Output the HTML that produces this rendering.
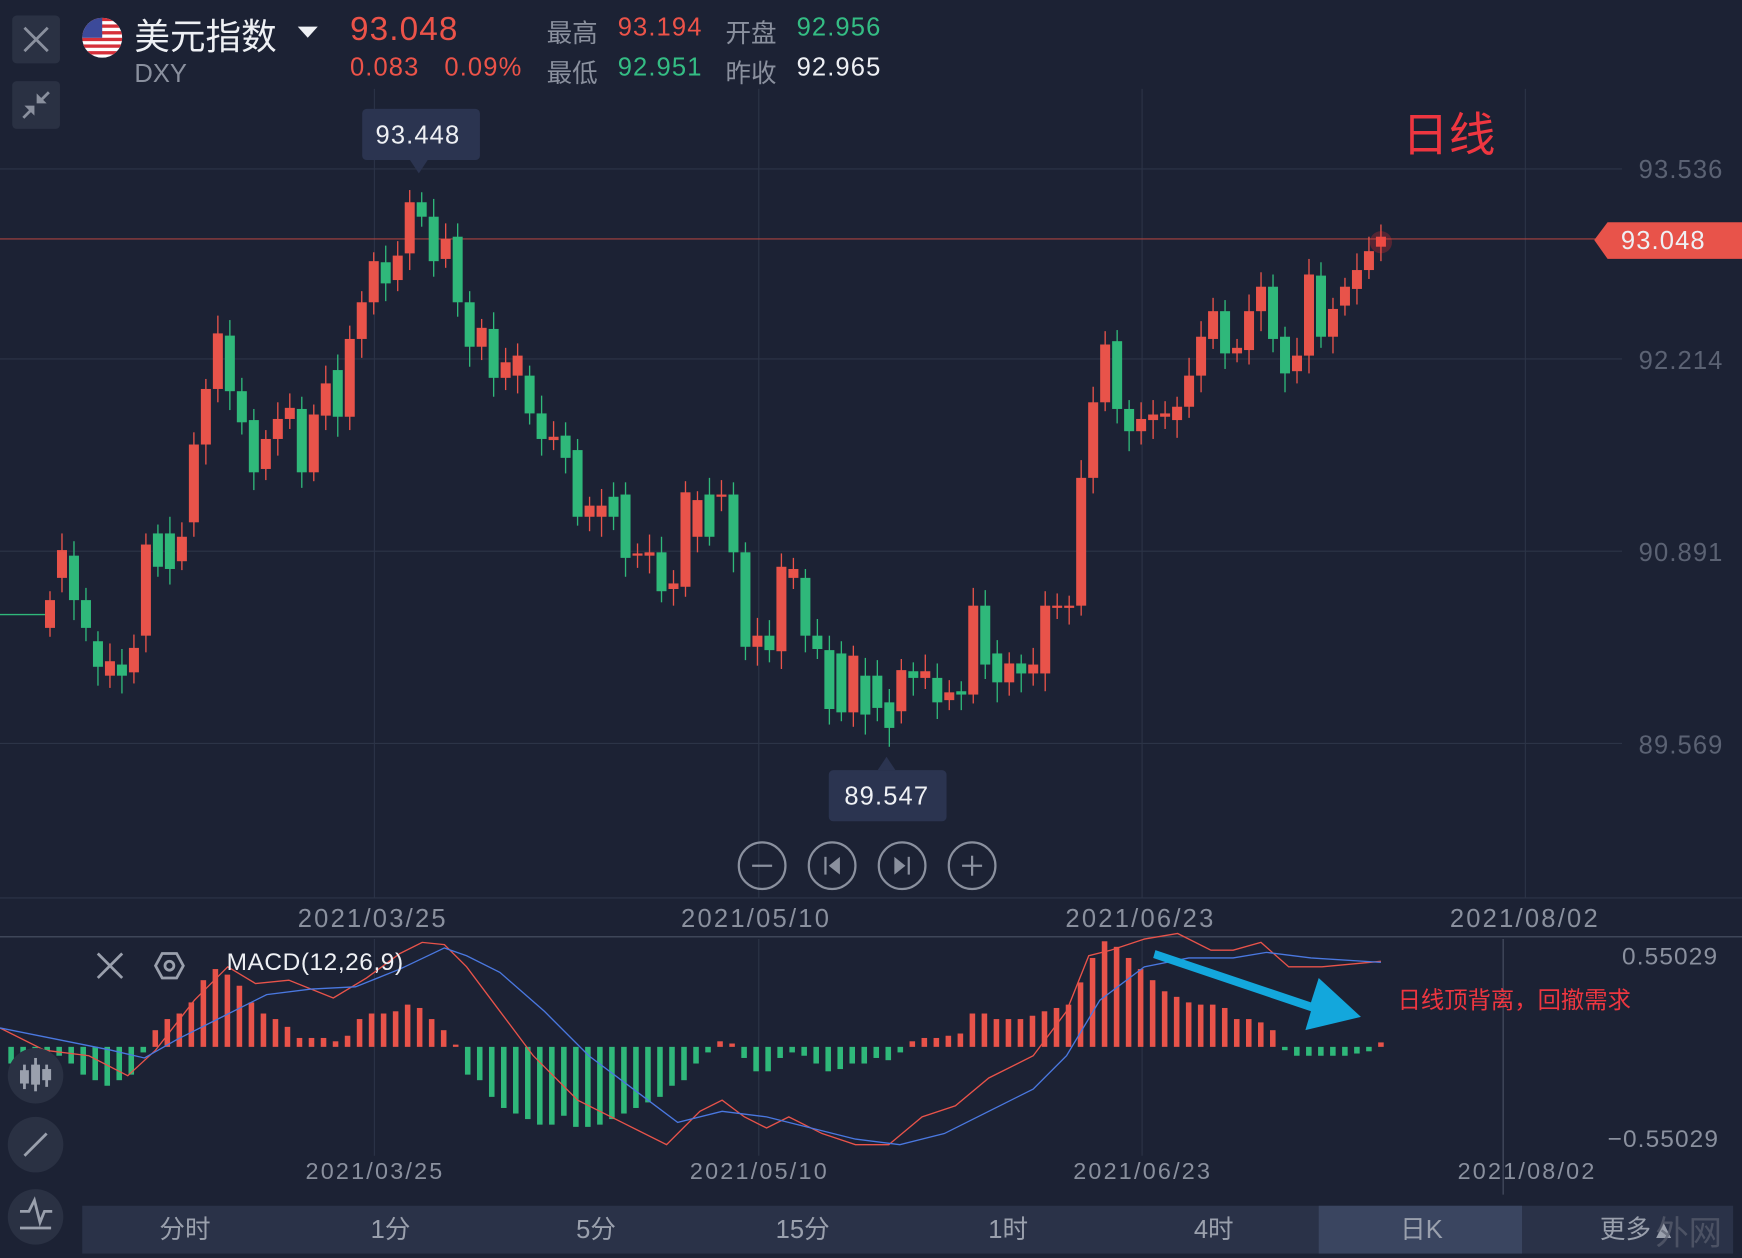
<!DOCTYPE html>
<html><head><meta charset="utf-8"><style>
html,body{margin:0;padding:0;background:#1c2234;width:1742px;height:1258px;overflow:hidden}
#w{position:absolute;left:0;top:0;width:1568px;height:1132px;transform:scale(1.11097,1.11131);transform-origin:0 0;font-family:"Liberation Sans","Noto Sans CJK SC",sans-serif;background:#1c2234}
.t{position:absolute;white-space:nowrap}
.r{color:#ec5349}.g{color:#34bd84}.gr{color:#8a909e}.wh{color:#eef0f4}
.n{letter-spacing:1px}
.dt{letter-spacing:2px}
.tab{position:absolute;top:1085px;height:43px;line-height:43px;font-size:23px;color:#9aa0ad;text-align:center;width:185px}
</style></head><body><div id="w">
<svg id="s" width="1568" height="1132" style="position:absolute;left:0;top:0">
<g stroke="#2c3447" stroke-width="1">
<line x1="0" y1="152" x2="1460" y2="152"/><line x1="0" y1="323" x2="1460" y2="323"/><line x1="0" y1="496" x2="1460" y2="496"/><line x1="0" y1="669" x2="1460" y2="669"/>
<line x1="337" y1="80" x2="337" y2="808"/><line x1="683" y1="80" x2="683" y2="808"/><line x1="1028" y1="80" x2="1028" y2="808"/><line x1="1373" y1="80" x2="1373" y2="808"/>
<line x1="337" y1="845" x2="337" y2="1040"/><line x1="683" y1="845" x2="683" y2="1040"/><line x1="1028" y1="845" x2="1028" y2="1040"/><line x1="1353" y1="845" x2="1353" y2="1075" stroke="#4a5265"/>
</g>
<line x1="0" y1="808" x2="1568" y2="808" stroke="#2c3447"/>
<line x1="0" y1="843" x2="1568" y2="843" stroke="#4a5265"/>
<line x1="0" y1="215" x2="1440" y2="215" stroke="#a8433f" stroke-width="1"/>
<g id="c"></g><g id="m"></g>
<circle cx="1243" cy="218" r="10" fill="#ff3030" opacity="0.25"/>
<polyline fill="none" stroke="#e8534a" stroke-width="1.2" points="0,925 40,945 80,950 115,968 140,945 175,900 205,870 230,885 260,882 300,898 330,880 360,858 380,848 400,850 420,870 450,910 480,950 520,990 560,1010 600,1030 630,1000 650,990 670,1005 690,1015 710,1005 740,1020 770,1030 800,1030 830,1005 860,995 890,970 930,950 960,910 980,860 1000,855 1030,845 1060,840 1090,855 1110,855 1135,848 1160,870 1190,870 1243,865"/>
<polyline fill="none" stroke="#4a78e0" stroke-width="1.2" points="0,925 50,935 100,945 130,952 160,935 200,915 240,895 280,890 320,888 360,872 400,853 420,860 450,875 490,910 530,950 570,980 610,1010 650,1000 690,1005 730,1015 770,1025 810,1030 850,1020 890,1000 930,980 960,950 990,900 1030,870 1070,862 1110,862 1140,857 1180,862 1243,866"/>
<polygon fill="#13a7dc" points="1040,855 1180,902 1187,880 1225,915 1175,927 1180,910 1038,862"/>
<rect x="326" y="98" width="106" height="46" rx="4" fill="#2b3450"/><polygon points="369,144 385,144 377,156" fill="#2b3450"/>
<rect x="746" y="693" width="106" height="46" rx="4" fill="#2b3450"/><polygon points="790,693 806,693 798,681" fill="#2b3450"/>
<polygon points="1435,216 1447,200 1568,200 1568,233 1447,233" fill="#e8534a"/>
<g fill="none" stroke="#8a909e" stroke-width="2">
<circle cx="686" cy="779" r="21"/><circle cx="749" cy="779" r="21"/><circle cx="812" cy="779" r="21"/><circle cx="875" cy="779" r="21"/>
<line x1="677" y1="779" x2="695" y2="779"/><line x1="866" y1="779" x2="884" y2="779"/><line x1="875" y1="770" x2="875" y2="788"/>
<line x1="743" y1="771" x2="743" y2="787"/><line x1="818" y1="771" x2="818" y2="787"/>
</g>
<polygon points="756,771 756,787 746,779" fill="#8a909e"/><polygon points="805,771 805,787 815,779" fill="#8a909e"/>
<rect x="11" y="14" width="43" height="43" rx="4" fill="#2a3143"/>
<rect x="11" y="73" width="43" height="43" rx="4" fill="#2a3143"/>
<g stroke="#8a909e" stroke-width="2.5" fill="none"><line x1="22" y1="25" x2="43" y2="46"/><line x1="43" y1="25" x2="22" y2="46"/>
<line x1="44" y1="83" x2="37" y2="90"/><line x1="21" y1="106" x2="28" y2="99"/></g>
<polygon points="34,85 34,94 43,94" fill="#8a909e" transform="translate(-1,-1)"/>
<polygon points="23,95 32,95 32,104" fill="#8a909e" transform="translate(-1,0)"/>
<clipPath id="fc"><circle cx="92" cy="34" r="18"/></clipPath>
<g clip-path="url(#fc)"><rect x="74" y="16" width="36" height="36" fill="#fff"/>
<g fill="#d6303a"><rect x="74" y="16" width="36" height="3"/><rect x="74" y="22" width="36" height="3"/><rect x="74" y="28" width="36" height="3"/><rect x="74" y="34" width="36" height="3"/><rect x="74" y="40" width="36" height="3"/><rect x="74" y="46" width="36" height="3"/></g>
<rect x="74" y="16" width="18" height="18" fill="#3c4a9a"/></g>
<polygon points="268,24 286,24 277,34" fill="#eef0f4"/>
<g stroke="#9aa0ad" stroke-width="2.5" fill="none"><line x1="88" y1="858" x2="110" y2="880"/><line x1="110" y1="858" x2="88" y2="880"/>
<polygon points="146,858 159,858 165,869 159,880 146,880 140,869"/><circle cx="152.5" cy="869" r="4"/></g>
<g fill="#2a3143"><circle cx="32" cy="968" r="25"/><circle cx="32" cy="1030" r="25"/><circle cx="32" cy="1095" r="25"/></g>
<g stroke="#9aa0ad" stroke-width="2.5" fill="none"><line x1="22" y1="1040" x2="42" y2="1020"/><polyline points="18,1090 26,1090 31,1080 36,1100 40,1090 47,1090"/><line x1="18" y1="1105" x2="46" y2="1105"/>
<line x1="22" y1="958" x2="22" y2="980"/><line x1="32" y1="952" x2="32" y2="982"/><line x1="42" y1="958" x2="42" y2="978"/></g>
<g fill="#9aa0ad"><rect x="18" y="963" width="8" height="12"/><rect x="28" y="958" width="8" height="18"/><rect x="38" y="962" width="8" height="10"/></g>
<rect x="74" y="1085" width="1486" height="43" fill="#2a3248"/><rect x="1187" y="1085" width="183" height="43" fill="#3a4560"/>
</svg>
<div class="t wh" style="left:121px;top:8px;font-size:32px">美元指数</div>
<div class="t gr" style="left:121px;top:53px;font-size:23px">DXY</div>
<div class="t r n" style="left:315px;top:10px;font-size:30px">93.048</div>
<div class="t r n" style="left:315px;top:47px;font-size:23px">0.083</div>
<div class="t r n" style="left:400px;top:47px;font-size:23px">0.09%</div>
<div class="t gr" style="left:492px;top:11px;font-size:23px">最高</div><div class="t r n" style="left:556px;top:11px;font-size:23px">93.194</div>
<div class="t gr" style="left:653px;top:11px;font-size:23px">开盘</div><div class="t g n" style="left:717px;top:11px;font-size:23px">92.956</div>
<div class="t gr" style="left:492px;top:47px;font-size:23px">最低</div><div class="t g n" style="left:556px;top:47px;font-size:23px">92.951</div>
<div class="t gr" style="left:653px;top:47px;font-size:23px">昨收</div><div class="t wh n" style="left:717px;top:47px;font-size:23px">92.965</div>
<div class="t wh n" style="left:338px;top:108px;font-size:23px">93.448</div>
<div class="t wh n" style="left:760px;top:703px;font-size:23px">89.547</div>
<div class="t" style="left:1262px;top:88px;font-size:42px;color:#ee3640">日线</div>
<div class="t n" style="left:1475px;top:139px;font-size:23px;color:#5b6273">93.536</div>
<div class="t n" style="left:1475px;top:311px;font-size:23px;color:#5b6273">92.214</div>
<div class="t n" style="left:1475px;top:484px;font-size:23px;color:#5b6273">90.891</div>
<div class="t n" style="left:1475px;top:657px;font-size:23px;color:#5b6273">89.569</div>
<div class="t wh n" style="left:1459px;top:203px;font-size:23px">93.048</div>
<div class="t gr dt" style="left:268px;top:813px;font-size:23px">2021/03/25</div>
<div class="t gr dt" style="left:613px;top:813px;font-size:23px">2021/05/10</div>
<div class="t gr dt" style="left:959px;top:813px;font-size:23px">2021/06/23</div>
<div class="t gr dt" style="left:1305px;top:813px;font-size:23px">2021/08/02</div>
<div class="t wh" style="left:204px;top:853px;font-size:22px;letter-spacing:0.5px">MACD(12,26,9)</div>
<div class="t gr n" style="left:1460px;top:848px;font-size:22px">0.55029</div>
<div class="t gr n" style="left:1447px;top:1012px;font-size:22px">−0.55029</div>
<div class="t" style="left:1258px;top:884px;font-size:21px;color:#ee3640">日线顶背离，回撤需求</div>
<div class="t gr dt" style="left:275px;top:1043px;font-size:21px">2021/03/25</div>
<div class="t gr dt" style="left:621px;top:1043px;font-size:21px">2021/05/10</div>
<div class="t gr dt" style="left:966px;top:1043px;font-size:21px">2021/06/23</div>
<div class="t gr dt" style="left:1312px;top:1043px;font-size:21px">2021/08/02</div>
<div class="tab" style="left:74px">分时</div><div class="tab" style="left:259px">1分</div><div class="tab" style="left:444px">5分</div><div class="tab" style="left:630px">15分</div><div class="tab" style="left:815px">1时</div><div class="tab" style="left:1000px">4时</div><div class="tab" style="left:1187px">日K</div><div class="tab" style="left:1382px">更多▲</div>
<div class="t" style="left:1490px;top:1085px;font-size:30px;color:#5b6070;opacity:.7">外网</div>
</div>
<script>
var R="#e8534a",G="#2fb87a";
var d=[[540,565,R],[495,520,R],[500,540,G],[540,565,G],[577,600,G],[595,608,R],[598,608,G],[583,605,R],[490,572,R],[480,510,G],[480,512,G],[483,505,R],[400,470,R],[350,400,R],[300,350,R],[302,352,G],[352,380,G],[378,425,G],[395,422,R],[377,395,R],[367,377,R],[368,425,G],[373,425,R],[345,374,R],[333,375,G],[305,375,R],[272,305,R],[235,272,R],[236,255,G],[230,252,R],[182,228,R],[182,195,G],[195,235,G],[215,233,R],[213,272,G],[272,312,G],[295,312,R],[296,340,G],[326,340,R],[320,338,R],[338,372,G],[372,395,G],[393,396,R],[392,412,G],[405,465,G],[455,465,R],[455,465,R],[447,465,G],[445,502,G],[498,500,R],[497,500,R],[497,532,G],[525,530,R],[443,528,R],[450,483,R],[445,483,G],[445,447,R],[445,497,G],[497,582,G],[572,582,R],[572,585,G],[510,586,R],[512,520,R],[520,572,G],[572,584,G],[585,638,G],[588,641,G],[590,641,R],[608,643,G],[608,637,G],[632,655,G],[603,640,R],[604,610,G],[604,610,R],[610,632,G],[623,630,R],[622,625,G],[545,625,R],[545,598,G],[588,614,G],[597,614,R],[597,606,G],[598,606,R],[545,606,R],[545,547,R],[545,547,R],[430,545,R],[362,430,R],[310,362,R],[307,368,G],[368,388,G],[377,388,R],[373,378,R],[372,375,R],[366,378,R],[338,366,R],[303,338,R],[280,305,R],[280,318,G],[313,318,R],[280,315,R],[258,280,R],[258,305,G],[303,336,G],[320,334,R],[247,320,R],[248,303,G],[278,303,R],[258,275,R],[243,260,R],[226,243,R],[213,222,R]];
var n=d.length,sp=(1243-45)/(n-1),h="";
for(var i=0;i<n;i++){var x=45+i*sp,a=d[i],t=a[0]-8-(i*7%9),b=a[1]+8+(i*5%11);
h+='<line x1="'+x+'" y1="'+t+'" x2="'+x+'" y2="'+b+'" stroke="'+a[2]+'" stroke-width="1.2"/>';
h+='<rect x="'+(x-4.5)+'" y="'+a[0]+'" width="9" height="'+Math.max(2,a[1]-a[0])+'" fill="'+a[2]+'"/>';}
h='<line x1="0" y1="553" x2="45" y2="553" stroke="'+G+'" stroke-width="1.2"/>'+h;
document.getElementById("c").innerHTML=h;
var m=[-15,-20,-15,-10,-8,-15,-25,-30,-35,-30,-25,-5,15,25,30,40,60,70,65,55,40,30,25,18,8,8,8,5,10,25,30,30,32,38,35,25,15,2,-25,-30,-45,-55,-60,-65,-70,-70,-62,-72,-72,-70,-65,-60,-55,-50,-45,-35,-30,-15,-5,5,3,-10,-22,-22,-10,-5,-8,-15,-22,-20,-15,-15,-10,-12,-5,5,8,8,10,12,30,30,25,25,25,28,32,35,38,58,80,95,90,80,70,60,50,45,40,38,38,35,25,25,22,15,-3,-8,-8,-8,-8,-8,-6,-4,4];
var k=m.length,s2=(1243-10)/(k-1),g="";
for(var j=0;j<k;j++){var xx=10+j*s2,v=m[j];g+='<rect x="'+(xx-2.5)+'" y="'+(v>0?942-v:942)+'" width="5" height="'+Math.abs(v||1)+'" fill="'+(v>0?R:G)+'"/>';}
document.getElementById("m").innerHTML=g;
</script>
</body></html>
